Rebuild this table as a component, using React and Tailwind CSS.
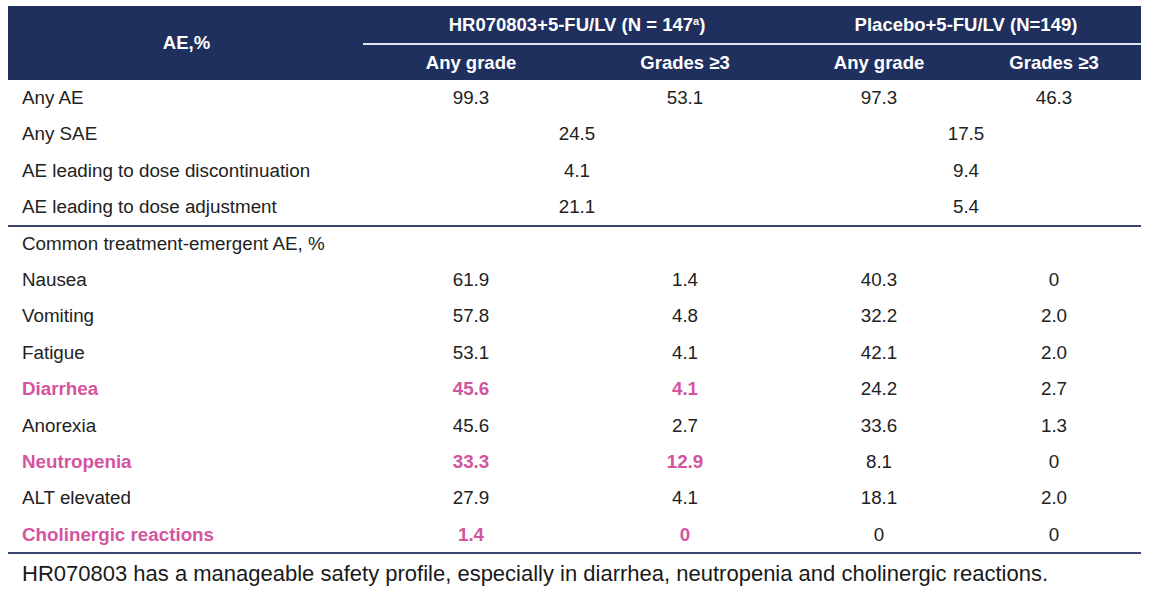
import React from "react";

const PINK = "text-[#d4549e] font-bold";

const top = [
  { label: "Any AE", cells: ["99.3", "53.1", "97.3", "46.3"] },
  { label: "Any SAE", merged: ["24.5", "17.5"] },
  { label: "AE leading to dose discontinuation", merged: ["4.1", "9.4"] },
  { label: "AE leading to dose adjustment", merged: ["21.1", "5.4"] },
];

const bottom = [
  { label: "Nausea", cells: ["61.9", "1.4", "40.3", "0"] },
  { label: "Vomiting", cells: ["57.8", "4.8", "32.2", "2.0"] },
  { label: "Fatigue", cells: ["53.1", "4.1", "42.1", "2.0"] },
  { label: "Diarrhea", cells: ["45.6", "4.1", "24.2", "2.7"], hl: true },
  { label: "Anorexia", cells: ["45.6", "2.7", "33.6", "1.3"] },
  { label: "Neutropenia", cells: ["33.3", "12.9", "8.1", "0"], hl: true },
  { label: "ALT elevated", cells: ["27.9", "4.1", "18.1", "2.0"] },
  { label: "Cholinergic reactions", cells: ["1.4", "0", "0", "0"], hl: true },
];

const widths = ["w-[216px]", "w-[212px]", "w-[176px]", "w-[174px]"];

function Row({ r }) {
  return (
    <div className="flex h-[36.4px] items-center">
      <div className={`w-[355px] pl-[14px] ${r.hl ? PINK : ""}`}>{r.label}</div>
      {r.merged ? (
        <>
          <div className="w-[428px] text-center">{r.merged[0]}</div>
          <div className="w-[350px] text-center">{r.merged[1]}</div>
        </>
      ) : (
        r.cells.map((c, i) => (
          <div key={i} className={`${widths[i]} text-center ${r.hl && i < 2 ? PINK : ""}`}>
            {c}
          </div>
        ))
      )}
    </div>
  );
}

export default function App() {
  return (
    <div
      className="w-[1157px] h-[598px] bg-white text-[#222222] text-[18.8px] pt-[6px]"
      style={{ fontFamily: '"Liberation Sans", Arial, sans-serif' }}
    >
      <div className="ml-[8px] w-[1133px]">
        <div className="flex h-[74px] bg-[#1f2f5e] text-white font-bold text-[18.5px]">
          <div className="w-[355px] flex items-center justify-center pl-[2px]">AE,%</div>
          <div className="flex-1 flex flex-col">
            <div className="flex h-[37px] items-center">
              <div className="w-[428px] text-center">
                HR070803+5-FU/LV (N = 147<sup className="text-[11px] font-bold">a</sup>)
              </div>
              <div className="w-[350px] text-center">Placebo+5-FU/LV (N=149)</div>
            </div>
            <div className="h-[2px] bg-[#dfe6f2]" />
            <div className="flex flex-1 items-center">
              <div className="w-[216px] text-center">Any grade</div>
              <div className="w-[212px] text-center">Grades ≥3</div>
              <div className="w-[176px] text-center">Any grade</div>
              <div className="w-[174px] text-center">Grades ≥3</div>
            </div>
          </div>
        </div>
        {top.map((r) => (
          <Row key={r.label} r={r} />
        ))}
        <div className="h-[2px] bg-[#3a4670] -mt-[1px]" />
        <div className="flex h-[35.4px] items-center pl-[14px]">Common treatment-emergent AE, %</div>
        {bottom.map((r) => (
          <Row key={r.label} r={r} />
        ))}
        <div className="h-[2px] bg-[#3a4670] -mt-[1px]" />
        <div className="pl-[14px] pt-[5px] text-[22px] text-[#1a1a1a] leading-[30px]">
          HR070803 has a manageable safety profile, especially in diarrhea, neutropenia and cholinergic reactions.
        </div>
      </div>
    </div>
  );
}
